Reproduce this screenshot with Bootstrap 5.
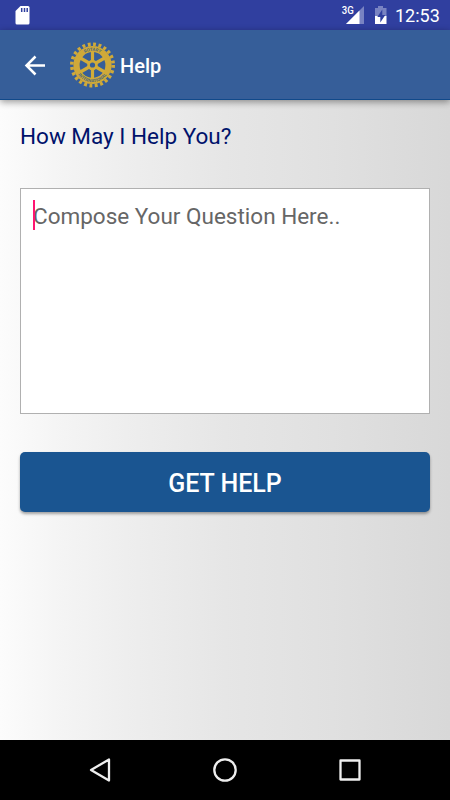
<!DOCTYPE html>
<html lang="en">
<head>
<meta charset="utf-8">
<meta name="viewport" content="width=device-width, initial-scale=1">
<title>Help</title>
<link href="https://cdn.jsdelivr.net/npm/bootstrap@5.3.0/dist/css/bootstrap.min.css" rel="stylesheet">
<style>
body{font-family:Roboto,"Liberation Sans",sans-serif;background:#000}
.screen{width:450px;height:800px;overflow:hidden}
.status{height:30px;background:#303f9f}
.clock{width:55px;font-size:18px;line-height:31px}
.appbar{height:70px;background:#365e99;border-bottom:1px solid #11498a;box-shadow:0 2px 7px rgba(0,0,0,.4);z-index:1}
.title{font-size:20px;font-weight:500;line-height:30px;padding:2px 0 0 5px}
.content{background:linear-gradient(90deg,#fcfcfc 0%,#f5f5f5 12%,#eee 28%,#e6e6e6 50%,#e0e0e0 74%,#d8d8d8 100%)}
.question{font-size:22.5px;line-height:30px;color:#00126b;padding-top:5px}
.question-box{padding-top:13px}
.compose{height:226px;border:1px solid #b0b0b0;padding:12px;font-size:22.5px;line-height:30px;color:#666}
.caret{width:2px;height:30px;left:13px;top:12px;background:#ff1571}
.action{padding-top:14px}
.help-btn{height:60px;background:#1a5591;border-radius:5px;font-size:25px;font-weight:500;box-shadow:0 2px 3px rgba(0,0,0,.35)}
.navkeys{height:60px;background:#000}
svg{display:block;flex:none}
</style>
<script src="https://cdn.jsdelivr.net/npm/bootstrap@5.3.0/dist/js/bootstrap.bundle.min.js"></script>
</head>
<body>
<div class="screen d-flex flex-column">
  <div class="status d-flex align-items-center justify-content-between text-white">
    <svg width="45" height="30"><path d="M20.500 6H28Q29.500 6 29.500 7.500V23Q29.500 24.500 28 24.500H17Q15.500 24.500 15.500 23V11Z" fill="#fff"/><path d="M21.700 8v4M24.500 8v4M27.200 8v4" stroke="#303f9f" stroke-width="1.500"/></svg>
    <div class="d-flex">
      <svg width="55" height="30" viewBox="340 0 55 30"><path d="M364 6v18h-18z" fill="#7983c2"/><path d="M359.500 10.500V24H346z" fill="#fff"/><path d="M341 5h13v9.500h-13z" fill="#303f9f"/><text x="341.800" y="13.700" font-size="10" font-weight="500" textLength="12" lengthAdjust="spacingAndGlyphs" fill="#fff">3G</text>
        <path d="M375 8h3V6h5v2h3.500v8.500h-11.500z" fill="#7983c2"/><path d="M375 16h11.500v8H375z" fill="#fff"/><path d="M382.300 9.500v5.500h3l-5 7.500v-5.500h-3z" fill="#303f9f"/></svg>
      <div class="clock">12:53</div>
    </div>
  </div>
  <nav class="appbar d-flex align-items-center text-white position-relative">
    <svg width="70" height="70"><path d="M45 35.500H27M35.500 26.500L26.500 35.500L35.500 44.500" fill="none" stroke="#fff" stroke-width="2.500"/></svg>
    <svg width="45" height="46" viewBox="-22.500 -23 45 46">
      <defs><path id="upper" d="M-14.200 0A14.200 14.200 0 0 1 14.200 0"/><path id="lower" d="M-17.300 0A17.300 17.300 0 0 0 17.300 0"/></defs>
      <circle r="20.700" fill="none" stroke="#d0aa39" stroke-width="3.600" stroke-dasharray="2.900 2.519"/>
      <circle r="16" fill="none" stroke="#cfa939" stroke-width="6.200"/>
      <g font-size="4.400" font-weight="700" fill="#506b78" text-anchor="middle"><text><textPath href="#upper" startOffset="50%">ROTARY</textPath></text><text><textPath href="#lower" startOffset="50%">INTERNATIONAL</textPath></text></g>
      <g stroke="#d2ac39" stroke-width="3.200"><path d="M0-14V14M-12.100-7L12.100 7M-12.100 7L12.100-7"/></g>
      <circle r="5.300" fill="#d2ac39"/><circle r="2.600" fill="#365e99"/>
    </svg>
    <div class="title">Help</div>
  </nav>
  <main class="content flex-grow-1 d-flex flex-column">
    <div class="question mx-3 px-1 mt-3">How May I Help You?</div>
    <div class="question-box mx-3 px-1 mt-4">
      <div class="position-relative">
        <div class="compose bg-white">Compose Your Question Here..</div>
        <div class="caret position-absolute"></div>
      </div>
    </div>
    <div class="action px-1 mx-3 d-grid mt-4">
      <button class="help-btn btn text-white px-0 pb-0 pt-1 border-0" type="button">GET HELP</button>
    </div>
  </main>
  <footer class="navkeys">
    <svg width="450" height="60" fill="none" stroke="#eee" stroke-width="2.300" stroke-linejoin="round"><path d="M109 19.500v21L91 30z"/><circle cx="225" cy="30" r="10.700"/><rect x="340.500" y="20.500" width="19" height="19"/></svg>
  </footer>
</div>
</body>
</html>
